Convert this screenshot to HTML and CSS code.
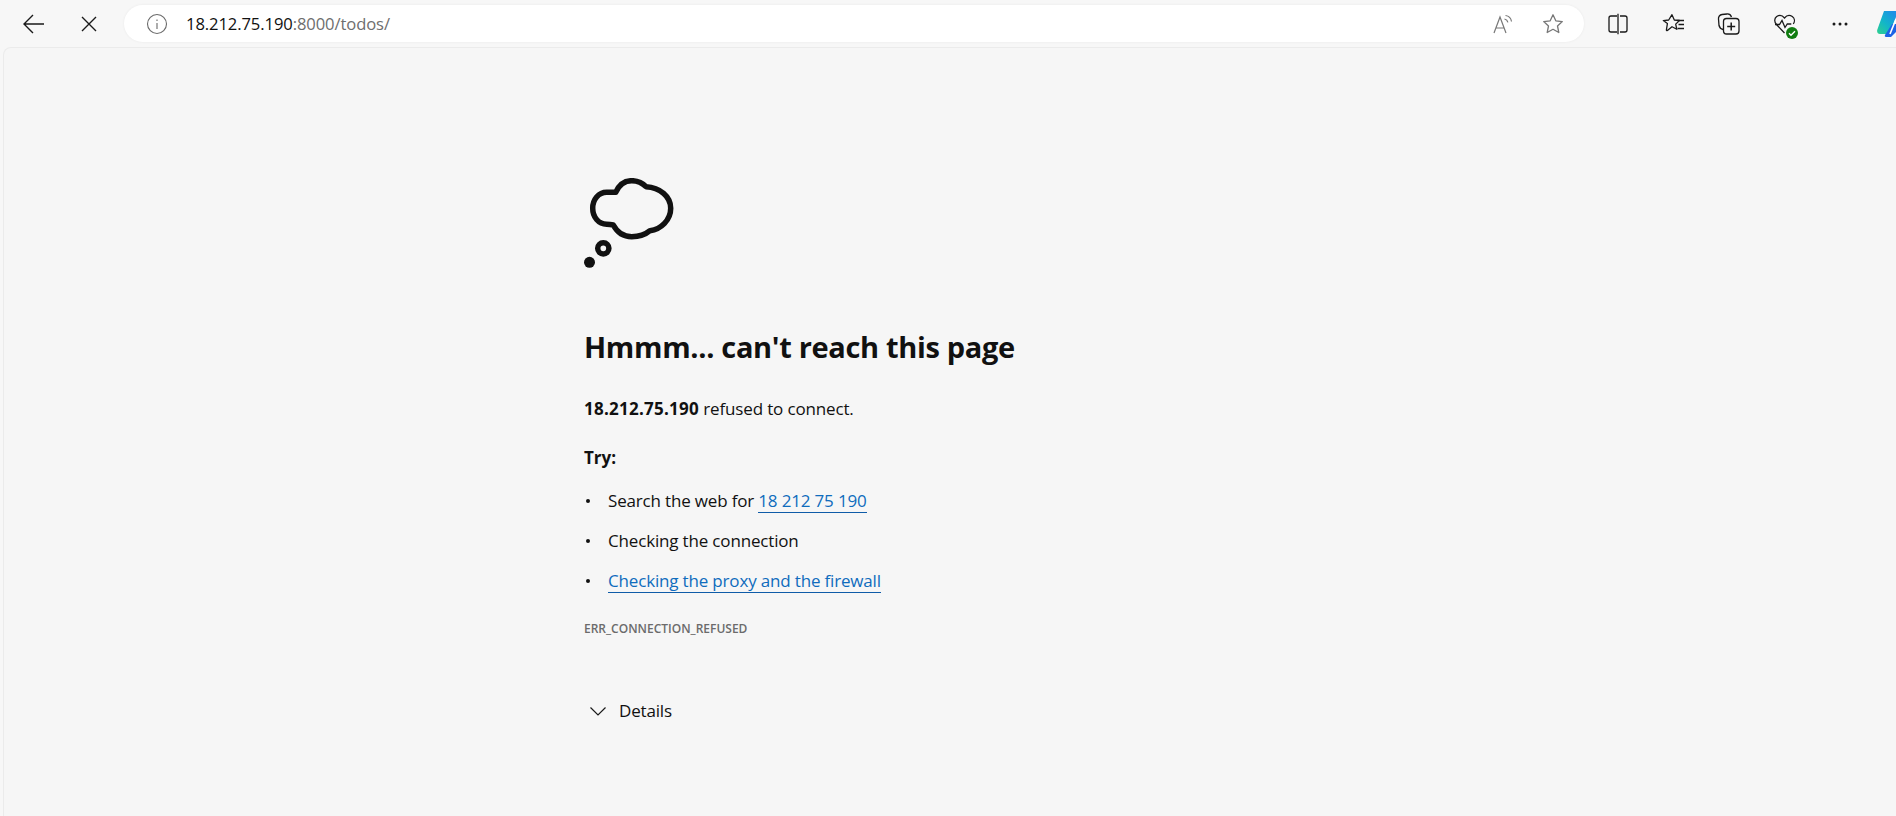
FILE: index.html
```html
<!DOCTYPE html>
<html lang="en">
<head>
<meta charset="utf-8">
<title>18.212.75.190</title>
<link rel="stylesheet" href="styles.css">
</head>
<body>
<header class="toolbar">
  <span class="tool back">
    <svg width="24" height="24" viewBox="0 0 24 24" fill="none" stroke="#1a1a1a" stroke-width="1.4"><path d="M2 12h20M11 3l-9 9 9 9"/></svg>
  </span>
  <span class="tool stop">
    <svg width="24" height="24" viewBox="0 0 24 24" fill="none" stroke="#1a1a1a" stroke-width="1.4"><path d="M5 5l14 14M19 5L5 19"/></svg>
  </span>
  <div class="address">
    <svg class="info" width="22" height="22" viewBox="0 0 22 22" fill="none" stroke="#6a6a6a" stroke-width="1.1"><circle cx="11" cy="11" r="9.5"/><path d="M11 10v6M11 6.5v1.5"/></svg>
    <span class="url"><span class="host">18.212.75.190</span>:8000/todos/</span>
    <svg class="addr-icon read" width="22" height="22" viewBox="0 0 22 22" fill="none" stroke="#777" stroke-width="1.2"><path d="M2 20L8 4l6 16M4 15h8"/><path d="M12.500 6c1.800.4 3 1.600 3.400 3.400M13.500 2.500c3.200.5 5.500 2.800 6 6"/></svg>
    <svg class="addr-icon" width="22" height="22" viewBox="0 0 22 22" fill="none" stroke="#777" stroke-width="1.300" stroke-linejoin="round"><path d="M11 1.800l2.800 6 6.500.8-4.800 4.400 1.300 6.500-5.800-3.200-5.800 3.200 1.300-6.500L1.700 8.600l6.500-.8z"/></svg>
  </div>
  <div class="actions">
    <svg width="24" height="24" viewBox="0 0 24 24" fill="none" stroke="#1a1a1a" stroke-width="1.300"><path d="M11 4H5a2 2 0 0 0-2 2v12a2 2 0 0 0 2 2h6M14 4h5a2 2 0 0 1 2 2v12a2 2 0 0 1-2 2h-5M12 1.800v20.400"/></svg>
    <svg width="24" height="24" viewBox="0 0 24 24" fill="none" stroke="#1a1a1a" stroke-width="1.300" stroke-linejoin="round"><path d="M10 2.700l2.300 5.300 5.200.5-3.800 3.600 1.100 5.200-4.800-2.600-4.600 3.800c-.6.300-1.100-.1-1-.7l1-6.200-4.100-3 5.400-.6z"/><path d="M15.500 8.500H22M16.500 12.500H22M15.500 16.500H22"/></svg>
    <svg width="24" height="24" viewBox="0 0 24 24" fill="none" stroke="#1a1a1a" stroke-width="1.300"><path d="M6 17.500C4 17 2.500 15.500 2 13.500L1.500 7a4 4 0 0 1 3.500-4.500L10 2c2-.2 3.800 1 4.500 3"/><rect x="6.500" y="6.500" width="15.500" height="15.500" rx="3"/><path d="M14.200 10.500v8M10.200 14.500h8" stroke-width="1.500"/></svg>
    <span class="health">
      <svg width="24" height="24" viewBox="0 0 24 24" fill="none" stroke="#1a1a1a" stroke-width="1.300"><path d="M11.500 21l-8-8.500C1 9.800 1.200 6.300 3.700 4.500c2.600-1.700 5.800-1 7.800 1.500 2-2.500 5.200-3.200 7.800-1.500 2.500 1.800 2.700 5 1 7.500"/><path d="M2 12.500h4.500l2.500-4 3 7 2.300-3.500h4"/></svg>
      <span class="badge"><svg width="10" height="10" viewBox="0 0 10 10" fill="none" stroke="#fff" stroke-width="1.400"><path d="M2 5.200l2 2 4-4"/></svg></span>
    </span>
    <span class="more-box"><svg width="16" height="4" viewBox="0 0 16 4" fill="#1a1a1a"><circle cx="2" cy="2" r="1.500"/><circle cx="8" cy="2" r="1.500"/><circle cx="14" cy="2" r="1.500"/></svg></span>
    <svg class="copilot" width="19" height="26" viewBox="0 0 19 26"><defs><linearGradient id="cg" x1="0" y1="1" x2=".8" y2="0"><stop offset="0" stop-color="#2fd08e"/><stop offset=".5" stop-color="#12b5c9"/><stop offset="1" stop-color="#1e8fe6"/></linearGradient></defs><path d="M7 0h12v6l-5 14c-.7 2-2 3-4 3H3c-2 0-3.300-1.500-2.800-4z" fill="url(#cg)"/><path d="M15 13h4v8l-5 5H9c-1 0-1.500-.8-1-2z" fill="#1d63e6"/><path d="M19 8l-6 15" stroke="#fff" stroke-width="1.600" fill="none"/></svg>
  </div>
</header>
<main class="page">
  <div class="content">
    <svg class="cloud" width="92" height="92" viewBox="0 0 92 92" fill="none" stroke="#111" stroke-width="5.500">
      <path d="M31.700 14.300C35 7 41 2.700 47.700 2.700c5.800 0 10.800 2.300 14.300 6C76 9.500 86.700 18.500 86.700 30.300c0 11.700-9.700 21.200-20.700 22.400-4.500 3.800-11 6-18.300 6-8.200 0-14.700-4.700-18.400-11.700-2.300-.5-4.300-.7-6.600-.7-8.200 0-14-7.300-14-16 0-8.800 5.800-16 14-16 3.200 0 6 0 9 0z" stroke-linejoin="round"/>
      <circle cx="19.300" cy="70.300" r="5.600"/>
      <circle cx="5.500" cy="84.300" r="5.500" fill="#111" stroke="none"/>
    </svg>
    <h1 class="title">Hmmm... can't reach this page</h1>
    <p class="line"><strong class="host-name">18.212.75.190</strong> refused to connect.</p>
    <p class="try">Try:</p>
    <ul class="tips">
      <li>Search the web for <a href="#">18 212 75 190</a></li>
      <li>Checking the connection</li>
      <li><a href="#">Checking the proxy and the firewall</a></li>
    </ul>
    <p class="code">ERR_CONNECTION_REFUSED</p>
    <div class="details">
      <svg width="18" height="10" viewBox="0 0 18 10" fill="none" stroke="#1a1a1a" stroke-width="1.200"><path d="M1.500 1.500L9 9l7.500-7.500"/></svg>
      <span>Details</span>
    </div>
  </div>
</main>
</body>
</html>
```
FILE: styles.css
```css
* { box-sizing: border-box; }
html, body { margin: 0; height: 100%; overflow: hidden; }
body {
  background: #f7f7f7;
  font-family: "Open Sans", "Noto Sans", sans-serif;
  color: #111;
  display: flex;
  flex-direction: column;
}
.toolbar {
  height: 47px;
  flex: none;
  display: flex;
  align-items: center;
  padding-left: 22px;
}
.tool { width: 24px; height: 24px; display: block; }
.tool svg { display: block; }
.stop { margin-left: 31px; }
.address {
  margin-left: 23px;
  width: 1460px;
  height: 37px;
  background: #fff;
  border-radius: 18.5px;
  display: flex;
  align-items: center;
  padding-left: 22px;
  padding-right: 20px;
  box-shadow: 0 0 3px rgba(0,0,0,.06);
}
.info { flex: none; }
.url {
  margin-left: 18px;
  font-size: 16.6px;
  letter-spacing: -0.1px;
  color: #6e6e6e;
  flex: 1;
}
.host { color: #111; }
.addr-icon { flex: none; }
.read { margin-right: 28px; }
.actions {
  margin-left: 22px;
  flex: 1;
  display: flex;
  align-items: center;
  gap: 31.5px;
  min-width: 0;
}
.actions svg { flex: none; display: block; }
.health { position: relative; display: block; width: 24px; height: 24px; }
.badge {
  position: absolute;
  right: -1px;
  bottom: -3px;
  width: 12px;
  height: 12px;
  border-radius: 50%;
  background: #107c10;
  display: flex;
  align-items: center;
  justify-content: center;
}
.more-box {
  width: 24px;
  display: flex;
  justify-content: center;
}
.copilot { margin-left: -6.5px; }
.page {
  flex: 1;
  margin-left: 3px;
  background: #f6f6f6;
  border: 1px solid #ebebeb;
  border-right: 0;
  border-bottom: 0;
  border-top-left-radius: 8px;
  padding: 130px 0 0 580px;
}
.content { width: 700px; }
.cloud { display: block; }
.title {
  margin: 55px 0 0;
  font-size: 29px;
  line-height: 44px;
  font-weight: 700;
  letter-spacing: -0.33px;
  color: #111;
}
.line, .try {
  margin: 28px 0 0;
  font-size: 17px;
  line-height: 24px;
  letter-spacing: -0.15px;
  color: #111;
}
.host-name { letter-spacing: 0.25px; }
.try { font-weight: 700; margin-top: 25px; letter-spacing: 0; }
.tips {
  list-style: none;
  margin: 19px 0 0;
  padding: 0;
  font-size: 17px;
  line-height: 24px;
  letter-spacing: -0.17px;
}
.tips li {
  padding-left: 24px;
  margin-bottom: 16px;
  position: relative;
}
.tips li::before {
  content: "";
  position: absolute;
  left: 2px;
  top: 10px;
  width: 4px;
  height: 4px;
  border-radius: 50%;
  background: #111;
}
.tips a {
  color: #0f6cbd;
  text-decoration: none;
  border-bottom: 1px solid #0f5ca8;
}
.code {
  margin: 28px 0 0;
  font-size: 12px;
  line-height: 16px;
  font-weight: 600;
  color: #6b6b6b;
}
.details {
  margin-top: 62px;
  padding-left: 5px;
  display: flex;
  align-items: center;
  gap: 12px;
  font-size: 17px;
  line-height: 24px;
  letter-spacing: -0.17px;
}
```
